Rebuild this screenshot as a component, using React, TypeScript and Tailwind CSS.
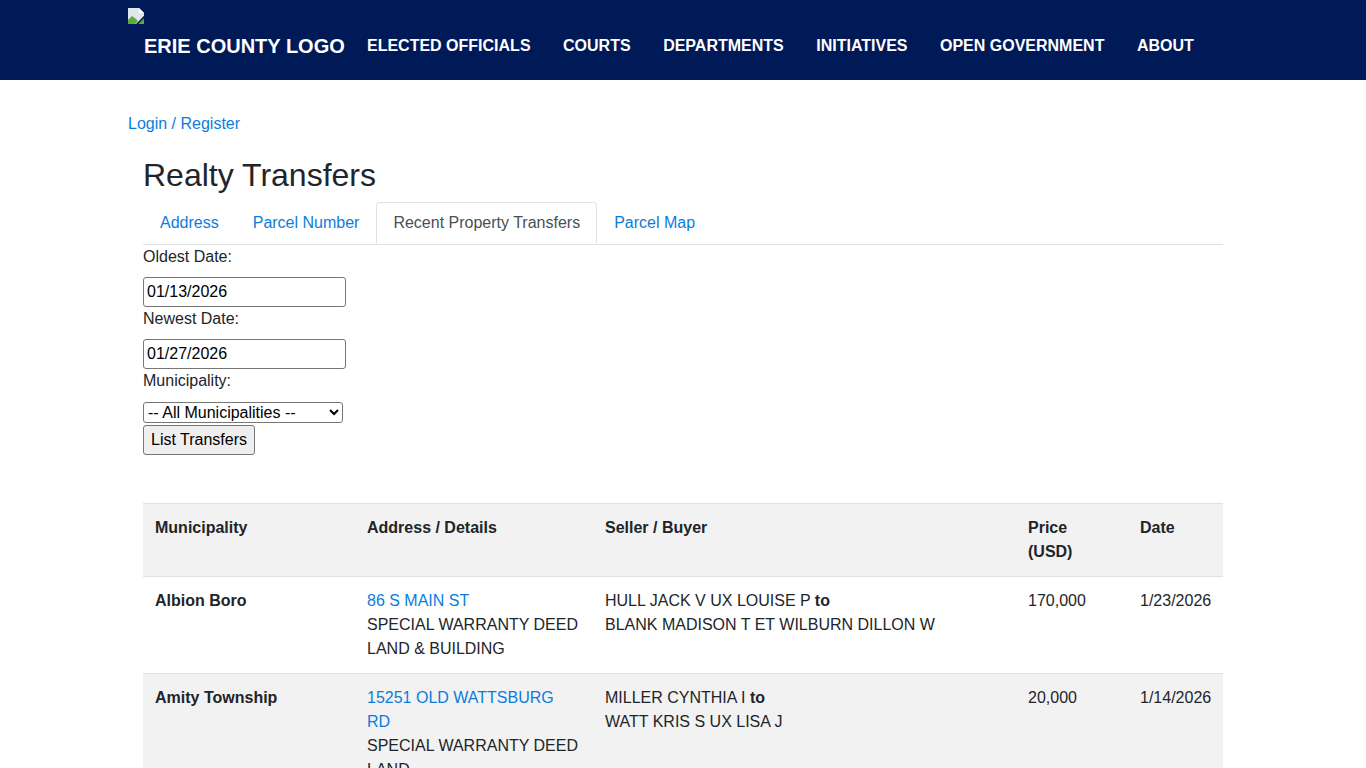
const navItems = [
  "ELECTED OFFICIALS",
  "COURTS",
  "DEPARTMENTS",
  "INITIATIVES",
  "OPEN GOVERNMENT",
  "ABOUT",
];

const transfers = [
  {
    municipality: "Albion Boro",
    address: "86 S MAIN ST",
    details: ["SPECIAL WARRANTY DEED", "LAND & BUILDING"],
    seller: "HULL JACK V UX LOUISE P",
    buyer: "BLANK MADISON T ET WILBURN DILLON W",
    price: "170,000",
    date: "1/23/2026",
  },
  {
    municipality: "Amity Township",
    address: "15251 OLD WATTSBURG RD",
    details: ["SPECIAL WARRANTY DEED", "LAND"],
    seller: "MILLER CYNTHIA I",
    buyer: "WATT KRIS S UX LISA J",
    price: "20,000",
    date: "1/14/2026",
  },
];

const BrokenImage = () => (
  <svg width="16" height="16" viewBox="0 0 16 16" className="block">
    <path d="M0 0h11l5 5v3L9 16H0z" fill="#dfe6ee" />
    <path d="M11 0l5 5h-5z" fill="#ffffff" />
    <path d="M0 16v-4l4-4 4 3 2 2-3 3z" fill="#5fa83f" />
    <path d="M16 10v6h-6z" fill="#5fa83f" />
    <path d="M16 8L8 16h2l6-6z" fill="#001a57" />
  </svg>
);

const tabClass = "block border border-transparent px-4 py-2 text-[#0c7cdc]";
const fieldClass =
  "block h-[30px] w-[203px] rounded-[3px] border border-[#767676] bg-white px-[3px] text-black";

export default function App() {
  return (
    <div className="h-[768px] overflow-hidden bg-white font-['Liberation_Sans',Arial,sans-serif] text-base leading-6 text-[#212529]">
      <header className="flex h-20 items-start bg-[#001a57] pl-32 text-white">
        <div className="w-[239px] pt-2">
          <BrokenImage />
          <div className="pl-4 pt-[10px] text-xl leading-6 font-bold">ERIE COUNTY LOGO</div>
        </div>
        <nav className="flex gap-[32.5px] pt-[34px] font-bold">
          {navItems.map((item) => (
            <a key={item}>{item}</a>
          ))}
        </nav>
      </header>

      <div className="px-32 pt-[32px]">
        <a className="text-[#0c7cdc]">Login / Register</a>
      </div>

      <main className="mx-[143px] pt-[20px]">
        <h2 className="text-[32px] leading-[38px] font-medium">Realty Transfers</h2>

        <ul className="mt-2 flex border-b border-[#dee2e6]">
          <li>
            <a className={tabClass}>Address</a>
          </li>
          <li>
            <a className={tabClass}>Parcel Number</a>
          </li>
          <li className="-mb-px">
            <a className="block rounded-t-[4px] border border-[#dee2e6] border-b-white bg-white px-4 py-2 text-[#495057]">
              Recent Property Transfers
            </a>
          </li>
          <li>
            <a className={tabClass}>Parcel Map</a>
          </li>
        </ul>

        <form>
          <label className="mb-2 block">Oldest Date:</label>
          <input className={fieldClass} defaultValue="01/13/2026" />
          <label className="mb-2 block">Newest Date:</label>
          <input className={fieldClass} defaultValue="01/27/2026" />
          <label className="mb-[9px] block">Municipality:</label>
          <select className="block h-[21px] w-[200px] rounded-[3px] border border-[#767676] bg-white text-black">
            <option>-- All Municipalities --</option>
          </select>
          <button
            type="button"
            className="mt-[2px] block h-[30px] w-[112px] rounded-[3px] border border-[#767676] bg-[#efefef] text-black"
          >
            List Transfers
          </button>
        </form>

        <table className="mt-12 w-[1080px] table-fixed border-collapse">
          <colgroup>
            <col className="w-[212px]" />
            <col className="w-[238px]" />
            <col className="w-[423px]" />
            <col className="w-[112px]" />
            <col className="w-[95px]" />
          </colgroup>
          <thead>
            <tr className="bg-[#f2f2f2] text-left align-top font-bold">
              <th className="border-t border-[#dee2e6] p-3">Municipality</th>
              <th className="border-t border-[#dee2e6] p-3">Address / Details</th>
              <th className="border-t border-[#dee2e6] p-3">Seller / Buyer</th>
              <th className="border-t border-[#dee2e6] p-3">
                Price
                <br />
                (USD)
              </th>
              <th className="border-t border-[#dee2e6] p-3">Date</th>
            </tr>
          </thead>
          <tbody>
            {transfers.map((row, i) => (
              <tr key={row.address} className={i % 2 === 1 ? "bg-[#f2f2f2] align-top" : "align-top"}>
                <td className="border-t border-[#dee2e6] p-3 font-bold">{row.municipality}</td>
                <td className="border-t border-[#dee2e6] p-3">
                  <a className="text-[#0c7cdc]">{row.address}</a>
                  {row.details.map((line) => (
                    <div key={line}>{line}</div>
                  ))}
                </td>
                <td className="border-t border-[#dee2e6] p-3">
                  {row.seller} <b>to</b>
                  <br />
                  {row.buyer}
                </td>
                <td className="border-t border-[#dee2e6] p-3">{row.price}</td>
                <td className="border-t border-[#dee2e6] p-3">{row.date}</td>
              </tr>
            ))}
          </tbody>
        </table>
      </main>
    </div>
  );
}
